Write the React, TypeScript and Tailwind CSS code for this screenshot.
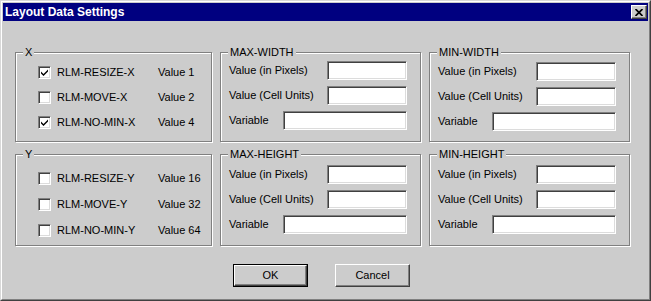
const FACE = "#cccccc";

function Checkbox({ checked }: { checked?: boolean }) {
  return (
    <span className="w-[13px] h-[13px] shrink-0 bg-white border border-t-[#808080] border-l-[#808080] border-r-white border-b-white shadow-[inset_1px_1px_0_#404040,inset_-1px_-1px_0_#dcdcdc] flex items-center justify-center">
      {checked && (
        <svg width="7" height="7" viewBox="0 0 7 7">
          <path d="M0 2.5 L2.5 5 L7 0.5 L7 2.5 L2.5 7 L0 4.5 Z" fill="#000" />
        </svg>
      )}
    </span>
  );
}

function TextBox({ w }: { w: string }) {
  return (
    <span
      className={`${w} h-[19px] block bg-white border border-t-[#808080] border-l-[#808080] border-r-white border-b-white shadow-[inset_1px_1px_0_#404040,inset_-1px_-1px_0_#dcdcdc]`}
    />
  );
}

function Group({ title, children, className }: { title: string; children: React.ReactNode; className?: string }) {
  return (
    <div className={`relative border border-[#808080] shadow-[inset_1px_1px_0_#fff,1px_1px_0_#fff] ${className ?? ""}`}>
      <span className="absolute left-[7px] top-[-8px] px-[2px] leading-[14px]" style={{ backgroundColor: FACE }}>
        {title}
      </span>
      {children}
    </div>
  );
}

function FlagGroup({ title, rows, top, rowH }: { title: string; rows: [string, string, boolean][]; top: string; rowH: string }) {
  return (
    <Group title={title} className={`h-full ${top}`}>
      {rows.map(([name, val, checked]) => (
        <div key={name} className={`${rowH} flex items-center pl-[22px]`}>
          <Checkbox checked={checked} />
          <span className="ml-[6px] w-[101px]">{name}</span>
          <span>{val}</span>
        </div>
      ))}
    </Group>
  );
}

function SizeGroup({ title, top }: { title: string; top: string }) {
  return (
    <Group title={title} className={`h-full ${top} pl-[8px] pr-[13px] flex flex-col gap-[6px]`}>
      <div className="flex items-center justify-between">
        <span>Value (in Pixels)</span>
        <TextBox w="w-[80px]" />
      </div>
      <div className="flex items-center justify-between">
        <span>Value (Cell Units)</span>
        <TextBox w="w-[80px]" />
      </div>
      <div className="flex items-center justify-between">
        <span>Variable</span>
        <TextBox w="w-[124px]" />
      </div>
    </Group>
  );
}

function Button({ label, isDefault }: { label: string; isDefault?: boolean }) {
  return (
    <div className={`w-[75px] h-[23px] ${isDefault ? "border border-black" : ""}`}>
      <div className="w-full h-full border border-t-white border-l-white border-r-[#404040] border-b-[#404040] shadow-[inset_-1px_-1px_0_#808080] flex items-center justify-center">
        {label}
      </div>
    </div>
  );
}

export default function App() {
  return (
    <div
      className="w-[651px] h-[301px] font-['Liberation_Sans',Arial,sans-serif] text-[11px] text-black border border-t-[#d8d8d8] border-l-[#d8d8d8] border-r-[#404040] border-b-[#404040]"
      style={{ backgroundColor: FACE }}
    >
      <div className="h-full border border-t-white border-l-white border-r-[#808080] border-b-[#808080] p-[1px] flex flex-col">
        {/* Title bar */}
        <div className="h-[18px] bg-[#000080] flex items-center justify-between pl-[2px] pr-[1px]">
          <span className="text-white font-bold text-[12px] leading-none">Layout Data Settings</span>
          <div
            className="w-[16px] h-[14px] border border-t-white border-l-white border-r-[#404040] border-b-[#404040] shadow-[inset_-1px_-1px_0_#808080] flex items-center justify-center"
            style={{ backgroundColor: FACE }}
          >
            <svg width="8" height="7" viewBox="0 0 8 7">
              <path d="M0.5 0 L7.5 7 M7.5 0 L0.5 7" stroke="#000" strokeWidth="1.7" />
            </svg>
          </div>
        </div>

        {/* Groups */}
        <div className="pl-[12px] pt-[31px] grid grid-cols-[197px_201px_201px] grid-rows-[90px_92px] gap-x-[8px] gap-y-[12px]">
          <FlagGroup
            title="X"
            top="pt-[7px]"
            rowH="h-[25px]"
            rows={[
              ["RLM-RESIZE-X", "Value 1", true],
              ["RLM-MOVE-X", "Value 2", false],
              ["RLM-NO-MIN-X", "Value 4", true],
            ]}
          />
          <SizeGroup title="MAX-WIDTH" top="pt-[8px]" />
          <SizeGroup title="MIN-WIDTH" top="pt-[9px]" />
          <FlagGroup
            title="Y"
            top="pt-[10px]"
            rowH="h-[26px]"
            rows={[
              ["RLM-RESIZE-Y", "Value 16", false],
              ["RLM-MOVE-Y", "Value 32", false],
              ["RLM-NO-MIN-Y", "Value 64", false],
            ]}
          />
          <SizeGroup title="MAX-HEIGHT" top="pt-[10px]" />
          <SizeGroup title="MIN-HEIGHT" top="pt-[10px]" />
        </div>

        {/* Buttons */}
        <div className="mt-[18px] pl-[230px] flex gap-[27px]">
          <Button label="OK" isDefault />
          <Button label="Cancel" />
        </div>
      </div>
    </div>
  );
}
